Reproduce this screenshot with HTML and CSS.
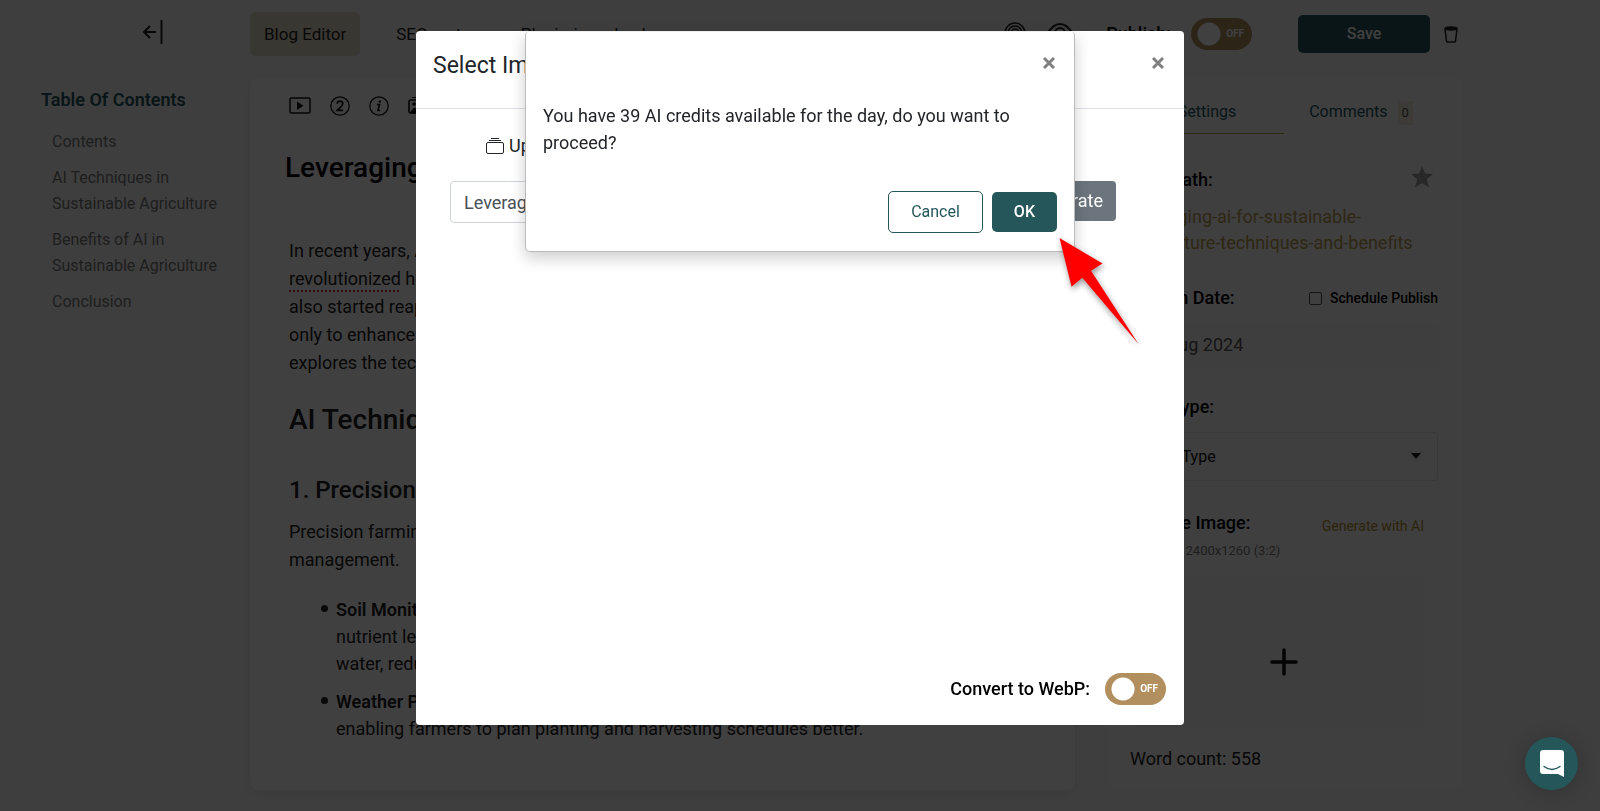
FILE: index.html
```html
<!DOCTYPE html>
<html lang="en">
<head>
<meta charset="utf-8">
<title>Blog Editor</title>
<link rel="stylesheet" href="styles.css">
</head>
<body>
<div class="page">
  <header class="topbar">
    <div class="topbar-side">
      <button class="icon-btn" aria-label="Collapse sidebar">
        <svg width="20" height="24" viewBox="0 0 20 24" fill="none" stroke="#222" stroke-width="2"><path d="M18.500 0v24M13 12H1.500M7 6l-6 6 6 6"/></svg>
      </button>
    </div>
    <nav class="nav">
      <a class="nav-link active" href="#">Blog Editor</a>
      <a class="nav-link" href="#">SEO meta</a>
      <a class="nav-link" href="#">Plagiarism check</a>
    </nav>
    <div class="actions">
      <button class="icon-btn" aria-label="Originality">
        <svg width="22" height="24" viewBox="0 0 22 24" fill="none" stroke="#222" stroke-width="1.500"><path d="M1 18v-7a10 10 0 0 1 20 0v7M4 20v-9a7 7 0 0 1 14 0v9M7 21V11a4 4 0 0 1 8 0v10"/></svg>
      </button>
      <button class="icon-btn" aria-label="Preview">
        <svg width="28" height="24" viewBox="0 0 28 24" fill="none" stroke="#222" stroke-width="2"><path d="M1 12Q7 2 14 2t13 10q-6 10-13 10T1 12z"/><circle cx="14" cy="11" r="5"/></svg>
      </button>
      <label class="strong publish" for="publish">Publish:</label>
      <span class="toggle"><input type="checkbox" id="publish"><span class="toggle-text">OFF</span></span>
      <div class="save-group">
        <button class="save">Save</button>
        <button class="icon-btn" aria-label="Delete">
          <svg width="14" height="17" viewBox="0 0 14 17" fill="none" stroke="#222" stroke-width="1.500"><path d="M1 3l1.500 12q.2 1 1.200 1h6.600q1 0 1.200-1L13 3"/><ellipse cx="7" cy="2.500" rx="6" ry="1.500" fill="#222"/></svg>
        </button>
      </div>
    </div>
  </header>

  <aside class="toc">
    <h2 class="toc-title">Table Of Contents</h2>
    <ul class="toc-list">
      <li><a href="#">Contents</a></li>
      <li><a href="#">AI Techniques in Sustainable Agriculture</a></li>
      <li><a href="#">Benefits of AI in Sustainable Agriculture</a></li>
      <li><a href="#">Conclusion</a></li>
    </ul>
  </aside>

  <main class="editor">
    <div class="tools">
      <button class="icon-btn" aria-label="Video">
        <svg width="22" height="18" viewBox="0 0 22 18"><rect x="1" y="1" width="20" height="15" rx="1.500" fill="none" stroke="#111" stroke-width="1.500"/><path d="M8 4.500v8.500l6.500-4.200z" fill="#111"/></svg>
      </button>
      <button class="icon-btn" aria-label="Step">
        <svg width="20" height="20" viewBox="0 0 20 20" fill="none" stroke="#111"><circle cx="10" cy="10" r="9.200" stroke-width="1.300"/><path d="M7.200 7.800q.2-2.600 2.800-2.600t2.700 2.400q0 1.300-1.400 2.800l-3.900 3.900h5.700" stroke-width="1.800"/></svg>
      </button>
      <button class="icon-btn" aria-label="Information">
        <svg width="20" height="20" viewBox="0 0 20 20" fill="none" stroke="#111"><circle cx="10" cy="10" r="9.200" stroke-width="1.300"/><path d="M8 8.500h2.500L9 14.500h2" stroke-width="1.600"/><circle cx="10.800" cy="5.500" r="1.200" fill="#111" stroke="none"/></svg>
      </button>
      <button class="icon-btn" aria-label="Images">
        <svg width="20" height="20" viewBox="0 0 20 20"><rect x="1" y="4" width="17" height="13" rx="2" fill="none" stroke="#111" stroke-width="1.600"/><path d="M4 1.500h14M2 17l4-5 4 2 4-4 4 6v1z" fill="#111" stroke="#111"/><circle cx="6" cy="8" r="1.800" fill="#111"/></svg>
      </button>
    </div>
    <h1 class="title">Leveraging AI</h1>
    <div class="prose">
      <p>In recent years, AI has<br><u class="spell">revolutionized</u> how<br>also started reaping<br>only to enhance<br>explores the techniques</p>
      <h2>AI Techniques</h2>
      <h3>1. Precision Farming</h3>
      <p>Precision farming<br>management.</p>
      <ul>
        <li><b>Soil Monitoring</b><br>nutrient levels<br>water, reducing</li>
        <li><b>Weather Prediction</b><br>enabling farmers to plan planting and harvesting schedules better.</li>
      </ul>
    </div>
  </main>

  <aside class="panel">
    <div class="tabs">
      <button class="tab selected">Settings</button>
      <button class="tab">Comments <span class="badge">0</span></button>
    </div>
    <div class="fields">
      <div class="row path-row">
        <span class="strong">Blog Path:</span>
        <button class="icon-btn" aria-label="Favourite">
          <svg width="22" height="22" viewBox="0 0 22 22"><path d="M11 0l3 7.600 8 .4-6.200 5.200L18 21.500l-7-4.600-7 4.600 2.200-8.300L0 8l8-.4z" fill="#a0a0a0"/></svg>
        </button>
      </div>
      <a class="path" href="#">leveraging-ai-for-sustainable-agriculture-techniques-and-benefits</a>
      <div class="row date-row">
        <label class="strong" for="date">Written Date:</label>
        <label class="check"><input type="checkbox"> Schedule Publish</label>
      </div>
      <input class="date" id="date" type="text" value="02 Aug 2024">
      <label class="strong type-label" for="type">Blog Type:</label>
      <div class="select-wrap">
        <select id="type"><option>Blog Type</option></select>
        <svg class="caret" width="10" height="6" viewBox="0 0 10 6"><path d="M0 0h10L5 6z" fill="#111"/></svg>
      </div>
      <div class="row image-row">
        <span class="strong">Feature Image:</span>
        <a class="generate" href="#">Generate with AI</a>
      </div>
      <span class="size">Best size 2400x1260 (3:2)</span>
      <button class="upload" aria-label="Add image">
        <svg width="28" height="28" viewBox="0 0 28 28" stroke="#111" stroke-width="3.500" stroke-linecap="round"><path d="M14 2v24M2 14h24"/></svg>
      </button>
      <span class="count">Word count: 558</span>
    </div>
  </aside>
</div>

<div class="backdrop">
  <section class="modal" role="dialog" aria-label="Select Image">
    <header class="modal-head">
      <h2>Select Image</h2>
      <button class="close" aria-label="Close"><svg width="12" height="12" viewBox="0 0 12 12" stroke="#808080" stroke-width="3"><path d="M1 1l10 10M11 1L1 11"/></svg></button>
    </header>
    <div class="modal-body">
      <button class="source">
        <svg width="18" height="16" viewBox="0 0 18 16" fill="none" stroke="#212529"><rect x=".5" y="4.500" width="17" height="11" rx="1.500"/><path d="M3 2.500h12M5 .5h8"/></svg>
        Upload
      </button>
      <div class="prompt">
        <input type="text" aria-label="Prompt" value="Leveraging AI">
        <button>Generate</button>
      </div>
    </div>
    <footer class="modal-foot">
      <label class="strong" for="webp">Convert to WebP:</label>
      <span class="toggle"><input type="checkbox" id="webp"><span class="toggle-text">OFF</span></span>
    </footer>

    <section class="confirm" role="alertdialog" aria-label="Confirm">
      <div class="confirm-head">
        <button class="close" aria-label="Close"><svg width="12" height="12" viewBox="0 0 12 12" stroke="#808080" stroke-width="3"><path d="M1 1l10 10M11 1L1 11"/></svg></button>
      </div>
      <p>You have 39 AI credits available for the day, do you want to proceed?</p>
      <div class="confirm-actions">
        <button class="cancel">Cancel</button>
        <button class="ok">OK</button>
      </div>
      <svg class="pointer" width="130" height="140" viewBox="0 0 130 140"><path d="M29.500 18L72.500 43.500 61 50.700 108.500 124 52.300 57.700 41.500 66.700z" fill="#f00"/></svg>
    </section>
  </section>
</div>

<button class="chat" aria-label="Open chat">
  <svg width="24" height="27" viewBox="0 0 24 27"><path d="M3 0h18q3 0 3 3v24l-6-3H3q-3 0-3-3V3q0-3 3-3z" fill="#fff"/><path d="M4 16.500q8 6 16 0" fill="none" stroke="#24565a" stroke-width="1.400" stroke-linecap="round"/></svg>
</button>
</body>
</html>
```
FILE: styles.css
```css
* { box-sizing: border-box; }
body {
  margin: 0;
  min-height: 100vh;
  background: #f8f8f8;
  color: #222;
  font: 18px/26px Roboto, "Noto Sans", sans-serif;
}
button, input, select { font: inherit; color: inherit; }
button { cursor: pointer; }
h1, h2, h3, p, ul { margin: 0; padding: 0; font-weight: 400; }
a { color: inherit; text-decoration: none; }
.icon-btn, .close { display: flex; padding: 0; border: 0; background: none; }
.strong { font-weight: 500; color: #000; }

.page {
  display: grid;
  grid-template-columns: 250px minmax(0, 1fr) 353px;
  column-gap: 34px;
  padding-right: 138px;
}
.topbar {
  grid-column: 1 / -1;
  display: flex;
  align-items: center;
  height: 68px;
  margin-bottom: 10px;
}
.topbar-side { width: 250px; display: flex; padding: 0 0 4px 143px; }
.nav { display: flex; gap: 22px; }
.nav-link { padding: 9px 14px; border-radius: 6px; font-size: 17px; }
.nav-link.active { background: #e4dcc4; }
.actions { display: flex; align-items: center; margin-left: auto; padding-right: 4px; gap: 20px; }
.publish { margin-left: 12px; }
.save-group { display: flex; align-items: center; gap: 14px; margin-left: 26px; }
.save {
  width: 132px;
  height: 38px;
  border: 0;
  border-radius: 5px;
  background: #24565a;
  color: #fff;
  font-size: 16px;
  font-weight: 500;
}

.toggle {
  position: relative;
  display: flex;
  width: 61px;
  height: 32px;
}
.toggle input {
  appearance: none;
  width: 100%;
  height: 100%;
  margin: 0;
  border-radius: 16px;
  background: radial-gradient(circle at 18px 16px, #fff 11px, #b28f5f 12px);
}
.toggle-text {
  position: absolute;
  right: 8px;
  top: 8px;
  color: #fff;
  font-size: 10px;
  font-weight: 700;
  line-height: 16px;
}

.toc { grid-column: 1; padding: 9px 30px 0 41px; }
.toc-title { margin-bottom: 16px; font-size: 18px; line-height: 26px; font-weight: 600; color: #24565a; }
.toc-list { display: grid; gap: 10px; padding-left: 11px; list-style: none; font-size: 16px; color: #777; }

.editor {
  grid-column: 2;
  margin-left: -34px;
  height: 712px;
  padding: 18px 39px;
  border-radius: 8px;
  background: #fff;
  box-shadow: 0 4px 12px rgba(0, 0, 0, .08);
}
.tools { display: flex; align-items: center; gap: 19px; height: 20px; }
.title { margin: 30px 0 47px -4px; font-size: 28px; line-height: 44px; font-weight: 500; color: #000; }
.prose { line-height: 28px; }
.prose p { white-space: nowrap; }
.prose h2 { margin: 23px 0 22px; font-size: 28px; line-height: 40px; font-weight: 500; }
.prose h3 { margin: 34px 0 12px; font-size: 24px; line-height: 32px; font-weight: 500; }
.spell { text-decoration: underline dotted #c33 2px; text-underline-offset: 5px; }
.prose ul { margin-top: 22px; padding-left: 47px; line-height: 27px; list-style: none; }
.prose li { position: relative; margin-bottom: 11px; white-space: nowrap; }
.prose li::before {
  content: "";
  position: absolute;
  left: -15px;
  top: 9px;
  width: 7px;
  height: 7px;
  border-radius: 50%;
  background: #222;
}
.prose b { font-weight: 600; }

.panel { grid-column: 3; height: 712px; border-radius: 8px; background: #fcfcfc; }
.tabs { display: flex; height: 56px; padding-left: 21px; }
.tab {
  width: 154px;
  padding: 12px 0 0;
  border: 0;
  background: none;
  color: #24565a;
  font-size: 16px;
  white-space: nowrap;
}
.tab.selected { border-bottom: 1px solid #b5a030; }
.badge { display: inline-block; margin-left: 6px; padding: 0 4px; background: #eee9dc; color: #555; font-size: 13px; line-height: 24px; }
.fields { display: flex; flex-direction: column; padding: 0 24px 0 21px; }
.row { display: flex; justify-content: space-between; align-items: center; height: 26px; }
.path-row { margin: 33px 5px 11px 0; }
.path-row .icon-btn { padding-bottom: 6px; }
.path { color: #b59b50; }
.date-row { margin-top: 29px; }
.check { display: flex; align-items: center; gap: 8px; color: #000; font-size: 14px; font-weight: 500; }
.check input { appearance: none; width: 13px; height: 13px; margin: 0; border: 1px solid #555; border-radius: 2px; }
.date { height: 43px; margin-top: 14px; padding: 0 12px 4px; border: 0; background: #f5f5f5; color: #555; }
.type-label { margin-top: 26px; }
.select-wrap { position: relative; margin-top: 12px; }
.select-wrap select {
  appearance: none;
  width: 100%;
  height: 49px;
  padding: 0 15px;
  border: 1px solid #e0e0e0;
  border-radius: 4px;
  background: transparent;
  color: #111;
  font-size: 16px;
}
.caret { position: absolute; right: 17px; top: 21px; }
.image-row { margin: 29px 14px 0 0; }
.generate { padding-top: 6px; color: #b08d2f; font-size: 14px; }
.size { font-size: 13px; color: #777; margin-top: 2px; }
.upload { display: flex; align-items: center; justify-content: center; height: 152px; margin: 12px 14px 0 0; padding: 20px 0 0 14px; border: 0; background: #f5f5f5; }
.count { margin-top: 18px; }

.backdrop {
  position: fixed;
  inset: 0;
  display: flex;
  justify-content: center;
  align-items: flex-start;
  padding-top: 31px;
  background: rgba(0, 0, 0, .75);
}
.modal {
  position: relative;
  display: flex;
  flex-direction: column;
  width: 768px;
  min-height: 694px;
  border-radius: 4px;
  background: #fff;
  color: #212529;
}
.modal-head {
  display: flex;
  justify-content: space-between;
  padding: 20px 20px 28px 17px;
  border-bottom: 1px solid #dee2e6;
}
.modal-head h2 { padding-top: 1px; font-size: 23px; line-height: 28px; }
.close { height: 12px; margin-top: 6px; }
.modal-body { flex: 1; padding: 24px 68px 0 34px; }
.source { display: flex; align-items: center; gap: 5px; margin-left: 36px; padding: 0; border: 0; background: none; }
.prompt { display: flex; align-items: flex-start; margin-top: 22px; }
.prompt input { flex: 1; height: 42px; padding: 0 13px; border: 1px solid #ced4da; border-radius: 4px; color: #495057; }
.prompt button { height: 40px; margin-left: 10px; padding: 0 13px; border: 0; border-radius: 4px; background: #6c757d; color: #fff; }
.modal-foot { display: flex; justify-content: flex-end; align-items: center; gap: 15px; padding: 0 18px 20px; }

.confirm {
  position: absolute;
  top: 0;
  left: 50%;
  width: 550px;
  margin-left: -275px;
  padding: 25px 17px 18px;
  border: 1px solid #bbb;
  border-top-color: #eee;
  border-radius: 5px;
  background: #fff;
  box-shadow: 0 6px 16px rgba(0, 0, 0, .2);
}
.confirm-head { display: flex; justify-content: flex-end; padding-right: 2px; }
.confirm-head .close { margin: 0; }
.confirm p { margin: 33px 0 35px; line-height: 27px; }
.confirm-actions { display: flex; justify-content: flex-end; align-items: center; gap: 9px; }
.cancel, .ok { border-radius: 5px; font-size: 16px; }
.cancel { height: 42px; padding: 0 22px; border: 1px solid #24565a; background: #fff; color: #24565a; }
.ok { height: 40px; padding: 0 22px; border: 0; background: #24565a; color: #fff; font-weight: 500; }
.pointer { position: absolute; left: 504px; top: 188px; filter: drop-shadow(1px 3px 3px rgba(0, 0, 0, .4)); }

.chat {
  position: fixed;
  right: 22px;
  bottom: 21px;
  display: flex;
  align-items: center;
  justify-content: center;
  width: 53px;
  height: 53px;
  border: 0;
  border-radius: 50%;
  background: #24565a;
  box-shadow: 0 2px 20px rgba(0, 0, 0, .2);
}
```
